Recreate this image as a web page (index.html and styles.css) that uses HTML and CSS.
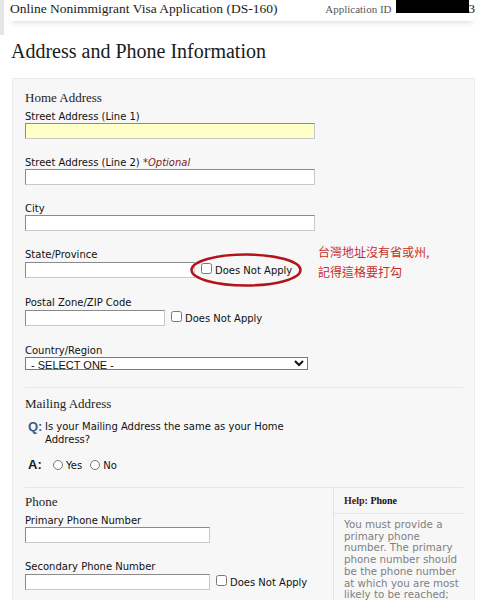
FILE: index.html
```html
<!DOCTYPE html>
<html lang="en">
<head>
    <meta charset="UTF-8">
    <meta name="viewport" content="width=device-width, initial-scale=1.0">
    <title>Address and Phone Information</title>
    <link rel="stylesheet" href="styles.css">
</head>
<body>
    <div class="top">
        <div class="edge"></div>
        <div class="appbar">
            <span class="app-title">Online Nonimmigrant Visa Application (DS-160)</span>
            <span class="app-id">Application ID <span class="redacted"></span><span class="id-end">3</span></span>
        </div>
    </div>

    <h1 class="page-title">Address and Phone Information</h1>

    <div class="panel">
        <!-- home address -->
        <div class="section">
            <h3 class="section-title">Home Address</h3>

            <div class="field">
                <label>Street Address (Line 1)</label>
                <input type="text" class="wide focused">
            </div>

            <div class="field">
                <label>Street Address (Line 2) <em class="optional">*Optional</em></label>
                <input type="text" class="wide">
            </div>

            <div class="field">
                <label>City</label>
                <input type="text" class="wide">
            </div>

            <div class="field state">
                <label>State/Province</label>
                <div class="inline">
                    <input type="text" class="mid">
                    <label class="na"><input type="checkbox"> Does Not Apply</label>
                </div>
                <svg class="circle" width="114" height="36" viewBox="0 0 114 36">
                    <ellipse cx="57" cy="18" rx="54.5" ry="15.5" fill="none" stroke="#b3141c" stroke-width="2.5"/>
                </svg>
                <div class="note">台灣地址沒有省或州,<br>記得這格要打勾</div>
            </div>

            <div class="field">
                <label>Postal Zone/ZIP Code</label>
                <div class="inline">
                    <input type="text" class="short">
                    <label class="na"><input type="checkbox"> Does Not Apply</label>
                </div>
            </div>

            <div class="field">
                <label>Country/Region</label>
                <select class="country">
                    <option>- SELECT ONE -</option>
                </select>
            </div>
        </div>

        <!-- mailing address -->
        <div class="section">
            <h3 class="section-title">Mailing Address</h3>
            <div class="qa">
                <span class="q">Q:</span>
                <span class="question">Is your Mailing Address the same as your Home Address?</span>
            </div>
            <div class="qa answer">
                <span class="q">A:</span>
                <label class="radio"><input type="radio" name="same"> Yes</label>
                <label class="radio"><input type="radio" name="same"> No</label>
            </div>
        </div>

        <!-- phone -->
        <div class="section phone">
            <div class="phone-main">
                <h3 class="section-title">Phone</h3>
                <div class="field">
                    <label>Primary Phone Number</label>
                    <input type="text" class="phone-input">
                </div>
                <div class="field">
                    <label>Secondary Phone Number</label>
                    <div class="inline">
                        <input type="text" class="phone-input">
                        <label class="na"><input type="checkbox"> Does Not Apply</label>
                    </div>
                </div>
            </div>
            <div class="help">
                <div class="help-title"><b class="help-word">Help:</b> Phone</div>
                <p class="help-text">You must provide a<br>primary phone<br>number. The primary<br>phone number should<br>be the phone number<br>at which you are most<br>likely to be reached;</p>
            </div>
        </div>
    </div>
</body>
</html>
```

FILE: styles.css
```css
* {
    box-sizing: border-box;
}

body {
    margin: 0;
    background: #fff;
    color: #111;
    font-family: "DejaVu Sans", Verdana, sans-serif;
    font-size: 10px;
    overflow: hidden;
}

.top {
    display: flex;
    align-items: flex-start;
    height: 35px;
}

.edge {
    width: 4px;
    height: 35px;
    background: #e6e6e6;
}

.appbar {
    margin-left: 6px;
    width: 465px;
    height: 21px;
    display: flex;
    justify-content: space-between;
    align-items: flex-start;
    font-family: "Liberation Serif", "Times New Roman", serif;
    box-shadow: 0 4px 5px -2px rgba(0, 0, 0, 0.12);
}

.app-title {
    font-size: 13.5px;
    line-height: 18px;
    color: #1a1a1a;
}

.app-id {
    font-size: 11px;
    line-height: 19px;
    color: #555;
    display: flex;
    align-items: flex-start;
}

.redacted {
    display: inline-block;
    width: 73px;
    height: 13px;
    background: #000;
    margin-left: 4px;
}

.id-end {
    font-size: 13px;
    line-height: 17px;
    color: #111;
}

.page-title {
    margin: 3px 0 0 11px;
    font-family: "Liberation Serif", "Times New Roman", serif;
    font-weight: normal;
    font-size: 20px;
    line-height: 26px;
    color: #1a1a1a;
}

.panel {
    margin: 14px 0 0 12px;
    width: 463px;
    height: 540px;
    background: #f7f7f7;
    border: 1px solid #ececec;
    padding: 0 11px 0 12px;
}

.section {
    border-bottom: 1px solid #e6e6e6;
}

.section-title {
    margin: 8px 0 4px;
    font-family: "Liberation Serif", "Times New Roman", serif;
    font-weight: normal;
    font-size: 13px;
    line-height: 16px;
    color: #222;
}

.panel > .section:first-child .section-title {
    margin-top: 11px;
}

.field {
    margin-bottom: 17px;
}

.field > label {
    display: block;
    line-height: 13px;
}

.optional {
    color: #7a1c1c;
}

input[type="text"] {
    display: block;
    height: 16px;
    border: 1px solid #8a8a8a;
    border-right-color: #c8c8c8;
    border-bottom-color: #c8c8c8;
    background: #fff;
    margin: 0;
    padding: 0 2px;
    font: inherit;
}

.wide {
    width: 290px;
}

.focused {
    background: #ffffc8 !important;
}

.mid {
    width: 170px;
}

.short {
    width: 140px;
}

.phone-input {
    width: 185px;
}

.inline {
    display: flex;
    align-items: center;
    height: 18px;
}

.na {
    display: flex;
    align-items: center;
    margin-left: 6px;
}

.na input {
    margin: 0 3px 3px 0;
    width: 11px;
    height: 11px;
}

.state {
    position: relative;
}

.circle {
    position: absolute;
    left: 164px;
    top: 4px;
}

.note {
    position: absolute;
    left: 293px;
    top: -6px;
    color: #c4302b;
    font-family: "Noto Sans CJK TC", "Noto Sans CJK SC", sans-serif;
    font-size: 12px;
    line-height: 20px;
}

.country {
    display: block;
    width: 283px;
    height: 13px;
    margin: 0;
    padding: 0 0 0 1px;
    border: 1px solid #7a7a7a;
    background: #fff;
    font-family: "Liberation Sans", Arial, sans-serif;
    font-size: 11px;
    line-height: 11px;
    color: #111;
}

.qa {
    display: flex;
    margin-left: 3px;
    margin-top: 8px;
}

.q {
    width: 17px;
    flex-shrink: 0;
    font-family: "Liberation Sans", Arial, sans-serif;
    font-weight: bold;
    font-size: 13px;
    line-height: 14px;
    color: #3b5c8f;
}

.answer .q {
    color: #1a1a1a;
}

.question {
    width: 240px;
    line-height: 13px;
}

.answer {
    align-items: center;
    height: 14px;
    margin-top: 12px;
    margin-bottom: 15px;
}

.radio {
    display: flex;
    align-items: center;
    margin-left: 8px;
}

.radio input {
    margin: 0 3px 0 0;
    width: 10px;
    height: 10px;
}

.phone {
    display: grid;
    grid-template-columns: 308px 1fr;
    border-bottom: none;
}

.phone-main .section-title {
    margin-top: 6px;
}

.help {
    border-left: 1px solid #e2e2e2;
}

.help-title {
    font-family: "Liberation Serif", "Times New Roman", serif;
    font-weight: bold;
    font-size: 10px;
    line-height: 12px;
    padding: 7px 0 6px 10px;
    border-bottom: 1px solid #e6e6e6;
}

.help-word {
    color: #4a1414;
}

.help-text {
    margin: 5px 0 0 10px;
    color: #808080;
    font-size: 10.3px;
    line-height: 11.7px;
}
```
